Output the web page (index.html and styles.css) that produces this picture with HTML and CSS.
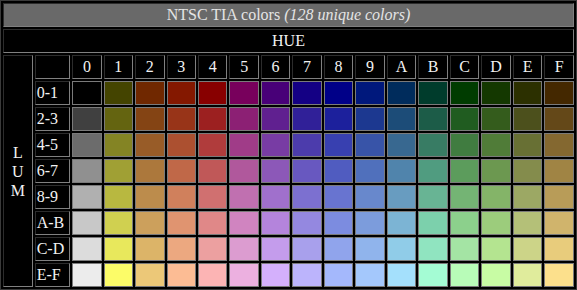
FILE: index.html
```html
<!DOCTYPE html>
<html>
<head>
<meta charset="utf-8">
<link rel="stylesheet" href="styles.css">
</head>
<body>
<table class="tia">
<tr><th colspan="18" class="title">NTSC TIA colors <i>(128 unique colors)</i></th></tr>
<tr><th colspan="18" class="hue">HUE</th></tr>
<tr><th rowspan="9" class="lum">L<br>U<br>M</th><th class="rl"></th><th class="h">0</th><th class="h">1</th><th class="h">2</th><th class="h">3</th><th class="h">4</th><th class="h">5</th><th class="h">6</th><th class="h">7</th><th class="h">8</th><th class="h">9</th><th class="h">A</th><th class="h">B</th><th class="h">C</th><th class="h">D</th><th class="h">E</th><th class="h">F</th></tr>
<tr><th class="rl">0-1</th><td style="background:#000000"></td><td style="background:#444400"></td><td style="background:#702800"></td><td style="background:#841800"></td><td style="background:#880000"></td><td style="background:#78005c"></td><td style="background:#480078"></td><td style="background:#140084"></td><td style="background:#000088"></td><td style="background:#00187c"></td><td style="background:#002c5c"></td><td style="background:#003c2c"></td><td style="background:#003c00"></td><td style="background:#143800"></td><td style="background:#2c3000"></td><td style="background:#442800"></td></tr>
<tr><th class="rl">2-3</th><td style="background:#404040"></td><td style="background:#646410"></td><td style="background:#844414"></td><td style="background:#983418"></td><td style="background:#9c2020"></td><td style="background:#8c2074"></td><td style="background:#602090"></td><td style="background:#302098"></td><td style="background:#1c209c"></td><td style="background:#1c3890"></td><td style="background:#1c4c78"></td><td style="background:#1c5c48"></td><td style="background:#205c20"></td><td style="background:#345c1c"></td><td style="background:#4c501c"></td><td style="background:#644818"></td></tr>
<tr><th class="rl">4-5</th><td style="background:#6c6c6c"></td><td style="background:#848424"></td><td style="background:#985c28"></td><td style="background:#ac5030"></td><td style="background:#b03c3c"></td><td style="background:#a03c88"></td><td style="background:#783ca4"></td><td style="background:#4c3cac"></td><td style="background:#3840b0"></td><td style="background:#3854a8"></td><td style="background:#386890"></td><td style="background:#387c64"></td><td style="background:#407c40"></td><td style="background:#507c38"></td><td style="background:#687034"></td><td style="background:#846830"></td></tr>
<tr><th class="rl">6-7</th><td style="background:#909090"></td><td style="background:#a0a034"></td><td style="background:#ac783c"></td><td style="background:#c06848"></td><td style="background:#c05858"></td><td style="background:#b0589c"></td><td style="background:#8c58b8"></td><td style="background:#6858c0"></td><td style="background:#505cc0"></td><td style="background:#5070bc"></td><td style="background:#5084ac"></td><td style="background:#509c80"></td><td style="background:#5c9c5c"></td><td style="background:#6c9850"></td><td style="background:#848c4c"></td><td style="background:#a08444"></td></tr>
<tr><th class="rl">8-9</th><td style="background:#b0b0b0"></td><td style="background:#b8b840"></td><td style="background:#bc8c4c"></td><td style="background:#d0805c"></td><td style="background:#d07070"></td><td style="background:#c070b0"></td><td style="background:#a070cc"></td><td style="background:#7c70d0"></td><td style="background:#6874d0"></td><td style="background:#6888cc"></td><td style="background:#689cc0"></td><td style="background:#68b494"></td><td style="background:#74b474"></td><td style="background:#84b468"></td><td style="background:#9ca864"></td><td style="background:#b89c58"></td></tr>
<tr><th class="rl">A-B</th><td style="background:#c8c8c8"></td><td style="background:#d0d050"></td><td style="background:#cca05c"></td><td style="background:#e09470"></td><td style="background:#e08888"></td><td style="background:#d084c0"></td><td style="background:#b484dc"></td><td style="background:#9488e0"></td><td style="background:#7c8ce0"></td><td style="background:#7c9cdc"></td><td style="background:#7cb4d4"></td><td style="background:#7cd0ac"></td><td style="background:#8cd08c"></td><td style="background:#9ccc7c"></td><td style="background:#b4c078"></td><td style="background:#d0b46c"></td></tr>
<tr><th class="rl">C-D</th><td style="background:#dcdcdc"></td><td style="background:#e8e85c"></td><td style="background:#dcb468"></td><td style="background:#eca880"></td><td style="background:#eca0a0"></td><td style="background:#dc9cd0"></td><td style="background:#c49cec"></td><td style="background:#a8a0ec"></td><td style="background:#90a4ec"></td><td style="background:#90b4ec"></td><td style="background:#90cce8"></td><td style="background:#90e4c0"></td><td style="background:#a4e4a4"></td><td style="background:#b4e490"></td><td style="background:#ccd488"></td><td style="background:#e8cc7c"></td></tr>
<tr><th class="rl">E-F</th><td style="background:#ececec"></td><td style="background:#fcfc68"></td><td style="background:#ecc878"></td><td style="background:#fcbc94"></td><td style="background:#fcb4b4"></td><td style="background:#ecb0e0"></td><td style="background:#d4b0fc"></td><td style="background:#bcb4fc"></td><td style="background:#a4b8fc"></td><td style="background:#a4c8fc"></td><td style="background:#a4e0fc"></td><td style="background:#a4fcd4"></td><td style="background:#b8fcb8"></td><td style="background:#c8fca4"></td><td style="background:#e0ec9c"></td><td style="background:#fce08c"></td></tr>
</table>
</body>
</html>
```
FILE: styles.css
```css
html, body {
  margin: 0;
  padding: 0;
  background: #000;
}
.tia {
  width: 577px;
  border-collapse: separate;
  border-spacing: 2px;
  border: 1px solid #3a3a3a;
  background: #000;
  font-family: "Liberation Serif", "Times New Roman", serif;
  font-size: 16px;
  color: #f2f2f2;
}
.tia th, .tia td {
  border: 1px inset grey;
  padding: 0 1px;
  height: 22px;
  font-weight: normal;
  vertical-align: middle;
}
.tia td {
  border-color: #7a7a7a;
  border-style: solid;
}
.title {
  background: #696969;
  color: #e4e4e4;
  text-align: center;
}
.hue {
  text-align: center;
}
.lum {
  width: 26px;
  text-align: center;
  line-height: 19px;
}
.rl {
  width: 32px;
  text-align: left;
}
.h {
  width: 26px;
  text-align: center;
}
```
